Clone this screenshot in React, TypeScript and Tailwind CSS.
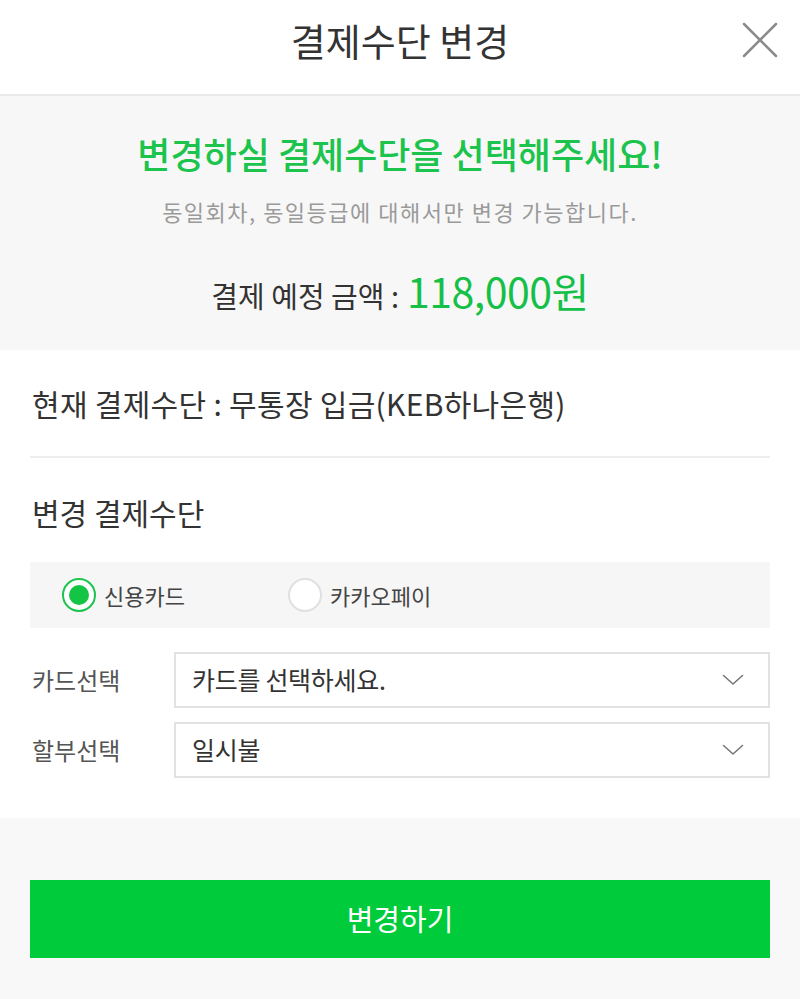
import React from "react";

const font = { fontFamily: '"Noto Sans CJK KR", "Noto Sans", sans-serif' };

function Chevron() {
  return (
    <svg width="22" height="12" viewBox="0 0 22 12" fill="none">
      <path d="M1.5 1.5 L11 10 L20.5 1.5" stroke="#777" strokeWidth="1.6" strokeLinecap="round" strokeLinejoin="round" />
    </svg>
  );
}

function Select({ label, value }: { label: string; value: string }) {
  return (
    <div className="flex items-center">
      <div className="w-[144px] pl-[2px] text-[24px] text-[#555] tracking-[0px]">{label}</div>
      <div className="flex-1 h-[56px] border-2 border-[#e2e2e2] bg-white flex items-center justify-between pl-[16px] pr-[24px]">
        <span className="text-[25px] text-[#333] tracking-[-0.3px]">{value}</span>
        <Chevron />
      </div>
    </div>
  );
}

export default function App() {
  return (
    <div className="w-[800px] h-[999px] bg-white flex flex-col" style={font}>
      {/* Header */}
      <div className="h-[96px] shrink-0 border-b-2 border-[#e9e9e9] flex items-center justify-center relative">
        <h1 className="text-[38px] text-[#333] font-normal tracking-[0px] -mt-[16px]">결제수단 변경</h1>
        <svg className="absolute right-[22px] top-[22px]" width="36" height="36" viewBox="0 0 36 36">
          <path d="M2 2 L34 34 M34 2 L2 34" stroke="#8a8a8a" strokeWidth="2.5" strokeLinecap="round" />
        </svg>
      </div>

      {/* Info section */}
      <div className="h-[254px] shrink-0 bg-[#f7f7f7] flex flex-col items-center">
        <div className="mt-[32px] text-[36px] font-medium text-[#1cc44e] tracking-[0px] leading-[50px]">
          변경하실 결제수단을 선택해주세요!
        </div>
        <div className="mt-[18px] text-[22px] text-[#9a9a9a] tracking-[1.5px] leading-[30px]">
          동일회차, 동일등급에 대해서만 변경 가능합니다.
        </div>
        <div className="mt-[38px] flex items-baseline leading-[52px]">
          <span className="text-[29px] text-[#333] tracking-[0px]">결제 예정 금액 : </span>
          <span className="ml-[8px] text-[41px] text-[#14c047] tracking-[-0.5px]">118,000원</span>
        </div>
      </div>

      {/* Form section */}
      <div className="h-[468px] shrink-0 bg-white px-[30px] flex flex-col">
        <div className="h-[108px] border-b-2 border-[#eeeeee] flex items-center pl-[2px]">
          <span className="text-[30px] text-[#333] tracking-[0.3px]">현재 결제수단 : 무통장 입금(KEB하나은행)</span>
        </div>
        <div className="h-[104px] flex items-center pl-[2px] pt-[4px]">
          <span className="text-[30px] text-[#333] tracking-[0px]">변경 결제수단</span>
        </div>
        <div className="h-[66px] bg-[#f6f6f6] flex items-center pl-[32px]">
          <div className="flex items-center w-[226px]">
            <div className="w-[34px] h-[34px] rounded-full border-2 border-[#1cc44e] bg-white flex items-center justify-center">
              <div className="w-[20px] h-[20px] rounded-full bg-[#13c445]" />
            </div>
            <span className="ml-[8px] text-[22px] text-[#444] tracking-[0px]">신용카드</span>
          </div>
          <div className="flex items-center">
            <div className="w-[34px] h-[34px] rounded-full border-2 border-[#e0e0e0] bg-white" />
            <span className="ml-[8px] text-[22px] text-[#444] tracking-[0px]">카카오페이</span>
          </div>
        </div>
        <div className="mt-[24px] flex flex-col gap-[14px]">
          <Select label="카드선택" value="카드를 선택하세요." />
          <Select label="할부선택" value="일시불" />
        </div>
      </div>

      {/* Footer */}
      <div className="flex-1 bg-[#f8f8f8] px-[30px] pt-[62px]">
        <button className="w-full h-[78px] bg-[#00cb3b] text-white text-[29px] tracking-[0px]" style={font}>
          변경하기
        </button>
      </div>
    </div>
  );
}
